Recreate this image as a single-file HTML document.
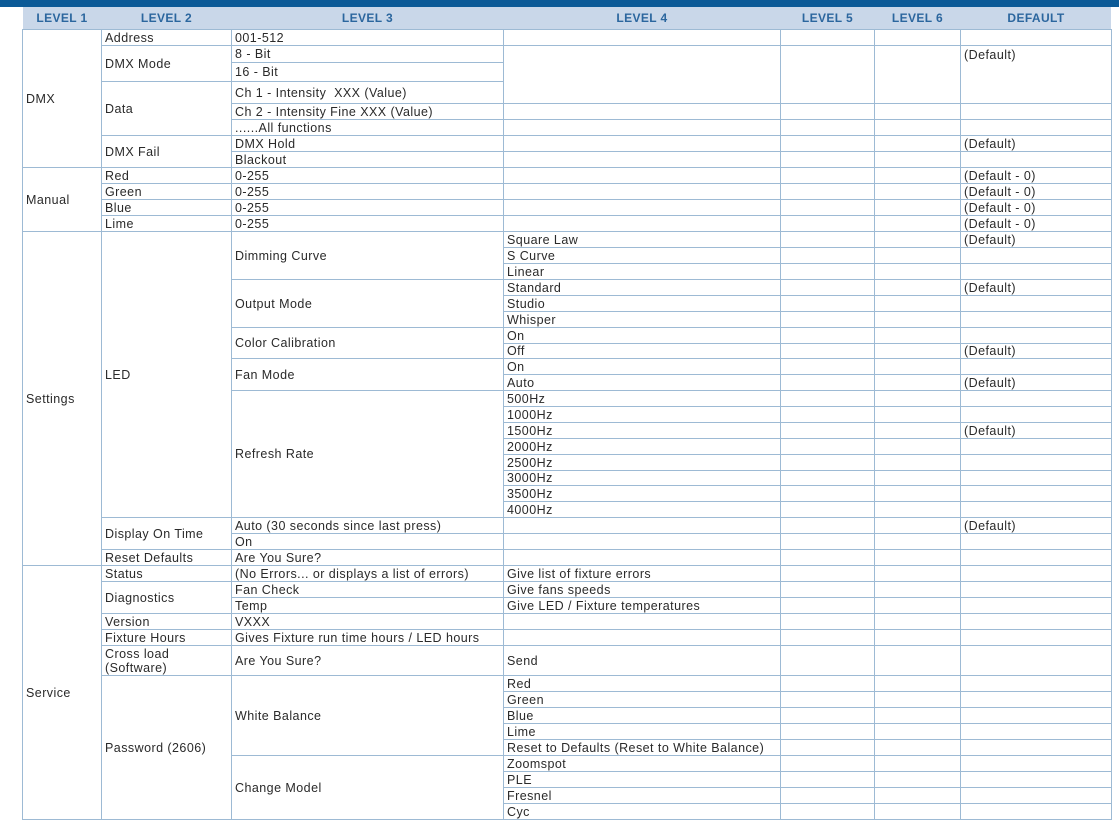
<!DOCTYPE html>
<html><head><meta charset="utf-8"><style>
html,body{margin:0;padding:0;width:1119px;height:813px;overflow:hidden;background:#fff;font-family:"Liberation Sans",sans-serif;}
.bar{position:absolute;left:0;top:0;width:1119px;height:7px;background:#0b5a97;}
.hd{position:absolute;left:23px;top:7px;width:1088px;height:22px;background:#c9d7e9;}
.hd span{position:absolute;top:0;height:22px;line-height:22px;text-align:center;font-weight:bold;font-size:12px;color:#2b669e;letter-spacing:0.4px;}
.g{position:absolute;left:22px;top:29px;padding:1px;gap:1px;background:#9dbad4;display:grid;
grid-template-columns:78px 129px 271px 276px 93px 85px 150px;
grid-template-rows:15px 16px 18px 21px 15px 15px 15px 15px 15px 15px 15px 15px 15px 15px 15px 15px 15px 15px 15px 14px 15px 15px 15px 15px 15px 15px 15px 14px 15px 15px 15px 15px 15px 15px 15px 15px 15px 15px 29px 15px 15px 15px 15px 15px 15px 15px 15px 15px;}
.g>div{background:#fff;font-size:12.5px;color:#2a2a2a;padding-left:3px;display:flex;align-items:center;white-space:nowrap;overflow:hidden;line-height:14px;letter-spacing:0.45px;}
.g>.a{grid-column:4}.g>.b{grid-column:5}.g>.c{grid-column:6}.g>.d{grid-column:7}
.g>.s3{grid-row:span 3;align-items:flex-start;padding-top:2px}
</style></head><body>
<div class="bar"></div>
<div class="hd">
<span style="left:0;width:78px">LEVEL 1</span>
<span style="left:79px;width:129px">LEVEL 2</span>
<span style="left:209px;width:271px">LEVEL 3</span>
<span style="left:481px;width:276px">LEVEL 4</span>
<span style="left:758px;width:93px">LEVEL 5</span>
<span style="left:852px;width:85px">LEVEL 6</span>
<span style="left:938px;width:150px">DEFAULT</span>
</div>
<div class="g">
<div style="grid-area:1/1/9/2">DMX</div>
<div style="grid-area:9/1/13/2">Manual</div>
<div style="grid-area:13/1/34/2">Settings</div>
<div style="grid-area:34/1/49/2">Service</div>

<div style="grid-area:1/2/2/3">Address</div>
<div style="grid-area:2/2/4/3">DMX Mode</div>
<div style="grid-area:4/2/7/3">Data</div>
<div style="grid-area:7/2/9/3">DMX Fail</div>
<div style="grid-area:9/2/10/3">Red</div>
<div style="grid-area:10/2/11/3">Green</div>
<div style="grid-area:11/2/12/3">Blue</div>
<div style="grid-area:12/2/13/3">Lime</div>
<div style="grid-area:13/2/31/3">LED</div>
<div style="grid-area:31/2/33/3">Display On Time</div>
<div style="grid-area:33/2/34/3">Reset Defaults</div>
<div style="grid-area:34/2/35/3">Status</div>
<div style="grid-area:35/2/37/3">Diagnostics</div>
<div style="grid-area:37/2/38/3">Version</div>
<div style="grid-area:38/2/39/3">Fixture Hours</div>
<div style="grid-area:39/2/40/3;line-height:14px">Cross load<br>(Software)</div>
<div style="grid-area:40/2/49/3">Password (2606)</div>

<div style="grid-area:1/3/2/4">001-512</div>
<div style="grid-area:2/3/3/4">8 - Bit</div>
<div style="grid-area:3/3/4/4">16 - Bit</div>
<div style="grid-area:4/3/5/4">Ch 1 - Intensity&nbsp; XXX (Value)</div>
<div style="grid-area:5/3/6/4">Ch 2 - Intensity Fine XXX (Value)</div>
<div style="grid-area:6/3/7/4">......All functions</div>
<div style="grid-area:7/3/8/4">DMX Hold</div>
<div style="grid-area:8/3/9/4">Blackout</div>
<div style="grid-area:9/3/10/4">0-255</div>
<div style="grid-area:10/3/11/4">0-255</div>
<div style="grid-area:11/3/12/4">0-255</div>
<div style="grid-area:12/3/13/4">0-255</div>
<div style="grid-area:13/3/16/4">Dimming Curve</div>
<div style="grid-area:16/3/19/4">Output Mode</div>
<div style="grid-area:19/3/21/4">Color Calibration</div>
<div style="grid-area:21/3/23/4">Fan Mode</div>
<div style="grid-area:23/3/31/4">Refresh Rate</div>
<div style="grid-area:31/3/32/4">Auto (30 seconds since last press)</div>
<div style="grid-area:32/3/33/4">On</div>
<div style="grid-area:33/3/34/4">Are You Sure?</div>
<div style="grid-area:34/3/35/4">(No Errors... or displays a list of errors)</div>
<div style="grid-area:35/3/36/4">Fan Check</div>
<div style="grid-area:36/3/37/4">Temp</div>
<div style="grid-area:37/3/38/4">VXXX</div>
<div style="grid-area:38/3/39/4">Gives Fixture run time hours / LED hours</div>
<div style="grid-area:39/3/40/4">Are You Sure?</div>
<div style="grid-area:40/3/45/4">White Balance</div>
<div style="grid-area:45/3/49/4">Change Model</div>

<div class="a"></div><div class="b"></div><div class="c"></div><div class="d"></div>
<div class="a s3"></div><div class="b s3"></div><div class="c s3"></div><div class="d s3">(Default)</div>
<div class="a"></div><div class="b"></div><div class="c"></div><div class="d"></div>
<div class="a"></div><div class="b"></div><div class="c"></div><div class="d"></div>
<div class="a"></div><div class="b"></div><div class="c"></div><div class="d">(Default)</div>
<div class="a"></div><div class="b"></div><div class="c"></div><div class="d"></div>
<div class="a"></div><div class="b"></div><div class="c"></div><div class="d">(Default - 0)</div>
<div class="a"></div><div class="b"></div><div class="c"></div><div class="d">(Default - 0)</div>
<div class="a"></div><div class="b"></div><div class="c"></div><div class="d">(Default - 0)</div>
<div class="a"></div><div class="b"></div><div class="c"></div><div class="d">(Default - 0)</div>
<div class="a">Square Law</div><div class="b"></div><div class="c"></div><div class="d">(Default)</div>
<div class="a">S Curve</div><div class="b"></div><div class="c"></div><div class="d"></div>
<div class="a">Linear</div><div class="b"></div><div class="c"></div><div class="d"></div>
<div class="a">Standard</div><div class="b"></div><div class="c"></div><div class="d">(Default)</div>
<div class="a">Studio</div><div class="b"></div><div class="c"></div><div class="d"></div>
<div class="a">Whisper</div><div class="b"></div><div class="c"></div><div class="d"></div>
<div class="a">On</div><div class="b"></div><div class="c"></div><div class="d"></div>
<div class="a">Off</div><div class="b"></div><div class="c"></div><div class="d">(Default)</div>
<div class="a">On</div><div class="b"></div><div class="c"></div><div class="d"></div>
<div class="a">Auto</div><div class="b"></div><div class="c"></div><div class="d">(Default)</div>
<div class="a">500Hz</div><div class="b"></div><div class="c"></div><div class="d"></div>
<div class="a">1000Hz</div><div class="b"></div><div class="c"></div><div class="d"></div>
<div class="a">1500Hz</div><div class="b"></div><div class="c"></div><div class="d">(Default)</div>
<div class="a">2000Hz</div><div class="b"></div><div class="c"></div><div class="d"></div>
<div class="a">2500Hz</div><div class="b"></div><div class="c"></div><div class="d"></div>
<div class="a">3000Hz</div><div class="b"></div><div class="c"></div><div class="d"></div>
<div class="a">3500Hz</div><div class="b"></div><div class="c"></div><div class="d"></div>
<div class="a">4000Hz</div><div class="b"></div><div class="c"></div><div class="d"></div>
<div class="a"></div><div class="b"></div><div class="c"></div><div class="d">(Default)</div>
<div class="a"></div><div class="b"></div><div class="c"></div><div class="d"></div>
<div class="a"></div><div class="b"></div><div class="c"></div><div class="d"></div>
<div class="a">Give list of fixture errors</div><div class="b"></div><div class="c"></div><div class="d"></div>
<div class="a">Give fans speeds</div><div class="b"></div><div class="c"></div><div class="d"></div>
<div class="a">Give LED / Fixture temperatures</div><div class="b"></div><div class="c"></div><div class="d"></div>
<div class="a"></div><div class="b"></div><div class="c"></div><div class="d"></div>
<div class="a"></div><div class="b"></div><div class="c"></div><div class="d"></div>
<div class="a">Send</div><div class="b"></div><div class="c"></div><div class="d"></div>
<div class="a">Red</div><div class="b"></div><div class="c"></div><div class="d"></div>
<div class="a">Green</div><div class="b"></div><div class="c"></div><div class="d"></div>
<div class="a">Blue</div><div class="b"></div><div class="c"></div><div class="d"></div>
<div class="a">Lime</div><div class="b"></div><div class="c"></div><div class="d"></div>
<div class="a">Reset to Defaults (Reset to White Balance)</div><div class="b"></div><div class="c"></div><div class="d"></div>
<div class="a">Zoomspot</div><div class="b"></div><div class="c"></div><div class="d"></div>
<div class="a">PLE</div><div class="b"></div><div class="c"></div><div class="d"></div>
<div class="a">Fresnel</div><div class="b"></div><div class="c"></div><div class="d"></div>
<div class="a">Cyc</div><div class="b"></div><div class="c"></div><div class="d"></div>
</div>
</body></html>
